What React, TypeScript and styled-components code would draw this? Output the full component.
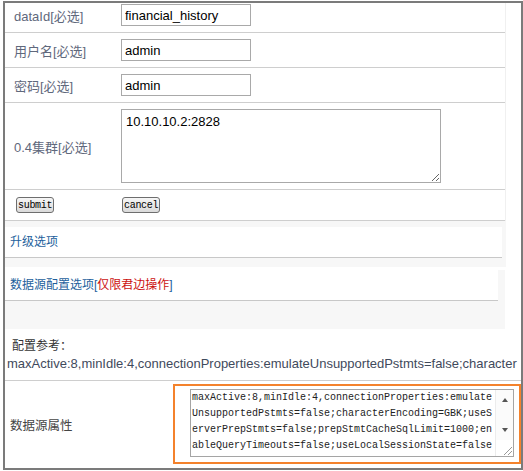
import React from 'react';
import styled, { createGlobalStyle } from 'styled-components';

const GlobalStyle = createGlobalStyle`
  html, body {
    margin: 0;
    padding: 0;
    background: #fff;
  }
  body {
    font-family: "Liberation Sans", "Noto Sans CJK SC", sans-serif;
    font-size: 12px;
    color: #333;
  }
`;

const Frame = styled.div`
  box-sizing: border-box;
  width: 520px;
  height: 469px;
  margin: 1px 0 0 3px;
  border: 2px solid #7b7b7b;
  overflow: hidden;
`;

const FormTable = styled.div`
  box-sizing: border-box;
  width: 501px;
  border-right: 1px solid #f0f0f0;
`;

const Row = styled.div<{ $pt: number; $pb: number }>`
  display: grid;
  grid-template-columns: 116px 1fr;
  align-items: center;
  padding: ${p => p.$pt}px 0 ${p => p.$pb}px;
  border-bottom: 1px solid #cecece;
`;

const Label = styled.div`
  padding-left: 9px;
  font-size: 13px;
  color: #5f687c;
`;

const TextInput = styled.input`
  box-sizing: border-box;
  width: 130px;
  height: 22px;
  margin: 0;
  padding: 0 3px;
  border: 1px solid #a9a9a9;
  font-family: "Liberation Sans", sans-serif;
  font-size: 13px;
  color: #000;
  outline: none;
`;

const ClusterArea = styled.textarea`
  box-sizing: border-box;
  display: block;
  width: 320px;
  height: 74px;
  margin: 0;
  padding: 4px 4px;
  border: 1px solid #a9a9a9;
  font-family: "Liberation Sans", sans-serif;
  font-size: 13px;
  line-height: 16px;
  color: #000;
  outline: none;
`;

const OldButton = styled.button<{ $ml: number }>`
  box-sizing: border-box;
  height: 16px;
  margin: 0 0 0 ${p => p.$ml}px;
  padding: 0 1px;
  border: 1px solid #6e6e6e;
  border-radius: 3px;
  background: linear-gradient(#f6f6f6, #dadada);
  font-family: "Liberation Mono", monospace;
  font-size: 10px;
  letter-spacing: -0.3px;
  line-height: 13px;
  color: #000;
  justify-self: start;
`;

const Panel = styled.div<{ $w: number; $mt: number; $pt: number; $pb: number }>`
  width: ${p => p.$w}px;
  margin-top: ${p => p.$mt}px;
  padding: ${p => p.$pt}px 0 ${p => p.$pb}px;
  background: #f7f7f7;
`;

const PanelHeader = styled.div<{ $mr: number }>`
  height: 30px;
  margin-right: ${p => p.$mr}px;
  padding-left: 5px;
  background: #fff;
  border-bottom: 1px solid #c8c8c8;
  font-size: 12px;
  line-height: 30px;
  color: #1d5f9c;
`;

const Warn = styled.span`
  color: #cc1111;
`;

const PanelBody = styled.div`
  height: 28px;
`;

const RefBlock = styled.div`
  padding: 8px 0 7px;
  border-bottom: 1px solid #cecece;
`;

const RefTitle = styled.div`
  padding-left: 7px;
  font-size: 12px;
  line-height: 18px;
  color: #333;
`;

const RefLine = styled.div`
  padding-left: 2px;
  font-size: 13px;
  line-height: 18px;
  color: #3f4a5c;
  white-space: nowrap;
`;

const PropRow = styled.div`
  display: grid;
  grid-template-columns: 168px 348px;
  height: 87px;
`;

const PropLabel = styled.div`
  align-self: center;
  padding-left: 5px;
  font-size: 12.5px;
  color: #444;
`;

const Highlight = styled.div`
  box-sizing: border-box;
  width: 348px;
  height: 80px;
  margin-top: 3px;
  padding: 3px 5px 5px 15px;
  border: 2px solid #f4822c;
`;

const AreaBox = styled.div`
  box-sizing: border-box;
  display: flex;
  width: 324px;
  height: 68px;
  border: 1px solid #a5a5a5;
  background: #fff;
`;

const PropArea = styled.textarea`
  flex: 1;
  min-width: 0;
  margin: 0;
  padding: 0 1px;
  border: none;
  resize: none;
  overflow: hidden;
  font-family: "Liberation Mono", monospace;
  font-size: 10px;
  line-height: 16px;
  color: #222;
  outline: none;
`;

const ScrollCol = styled.div`
  display: flex;
  flex-direction: column;
  width: 17px;
  border-left: 1px solid #ececec;
  background: #fbfbfb;
`;

const ScrollBtn = styled.div<{ $dir: 'up' | 'down' }>`
  display: flex;
  align-items: center;
  justify-content: center;
  height: 20px;

  &::before {
    content: '';
    width: 0;
    height: 0;
    border-left: 3.5px solid transparent;
    border-right: 3.5px solid transparent;
    ${p =>
      p.$dir === 'up'
        ? 'border-bottom: 4px solid #555;'
        : 'border-top: 4px solid #555;'}
  }
`;

const ScrollTrack = styled.div`
  flex: 1;
`;

const Grip = styled.div`
  display: flex;
  align-items: flex-end;
  justify-content: flex-end;
  height: 16px;
  background: #fff;
`;

const PROPS =
  'maxActive:8,minIdle:4,connectionProperties:emulateUnsupportedPstmts=false;characterEncoding=GBK;useServerPrepStmts=false;prepStmtCacheSqlLimit=1000;enableQueryTimeouts=false;useLocalSessionState=false;';

export default function App() {
  return (
    <>
      <GlobalStyle />
      <Frame>
        <FormTable>
          <Row $pt={1} $pb={6}>
            <Label>dataId[必选]</Label>
            <div>
              <TextInput defaultValue="financial_history" />
            </div>
          </Row>
          <Row $pt={6} $pb={6}>
            <Label>用户名[必选]</Label>
            <div>
              <TextInput defaultValue="admin" />
            </div>
          </Row>
          <Row $pt={6} $pb={6}>
            <Label>密码[必选]</Label>
            <div>
              <TextInput defaultValue="admin" />
            </div>
          </Row>
          <Row $pt={6} $pb={6}>
            <Label>0.4集群[必选]</Label>
            <div>
              <ClusterArea defaultValue="10.10.10.2:2828" />
            </div>
          </Row>
          <Row $pt={7} $pb={7}>
            <OldButton $ml={11}>submit</OldButton>
            <OldButton $ml={1}>cancel</OldButton>
          </Row>
        </FormTable>

        <Panel $w={501} $mt={0} $pt={6} $pb={9}>
          <PanelHeader $mr={4}>升级选项</PanelHeader>
        </Panel>

        <Panel $w={500} $mt={3} $pt={0} $pb={0}>
          <PanelHeader $mr={7}>
            数据源配置选项[<Warn>仅限君边操作</Warn>]
          </PanelHeader>
          <PanelBody />
        </Panel>

        <RefBlock>
          <RefTitle>配置参考：</RefTitle>
          <RefLine>
            maxActive:8,minIdle:4,connectionProperties:emulateUnsupportedPstmts=false;character
          </RefLine>
        </RefBlock>

        <PropRow>
          <PropLabel>数据源属性</PropLabel>
          <Highlight>
            <AreaBox>
              <PropArea defaultValue={PROPS} />
              <ScrollCol>
                <ScrollBtn $dir="up" />
                <ScrollTrack />
                <ScrollBtn $dir="down" />
                <Grip>
                  <svg width="12" height="12" viewBox="0 0 12 12">
                    <path d="M11 3 L3 11 M11 7 L7 11" stroke="#999" strokeWidth="1" fill="none" />
                  </svg>
                </Grip>
              </ScrollCol>
            </AreaBox>
          </Highlight>
        </PropRow>
      </Frame>
    </>
  );
}
